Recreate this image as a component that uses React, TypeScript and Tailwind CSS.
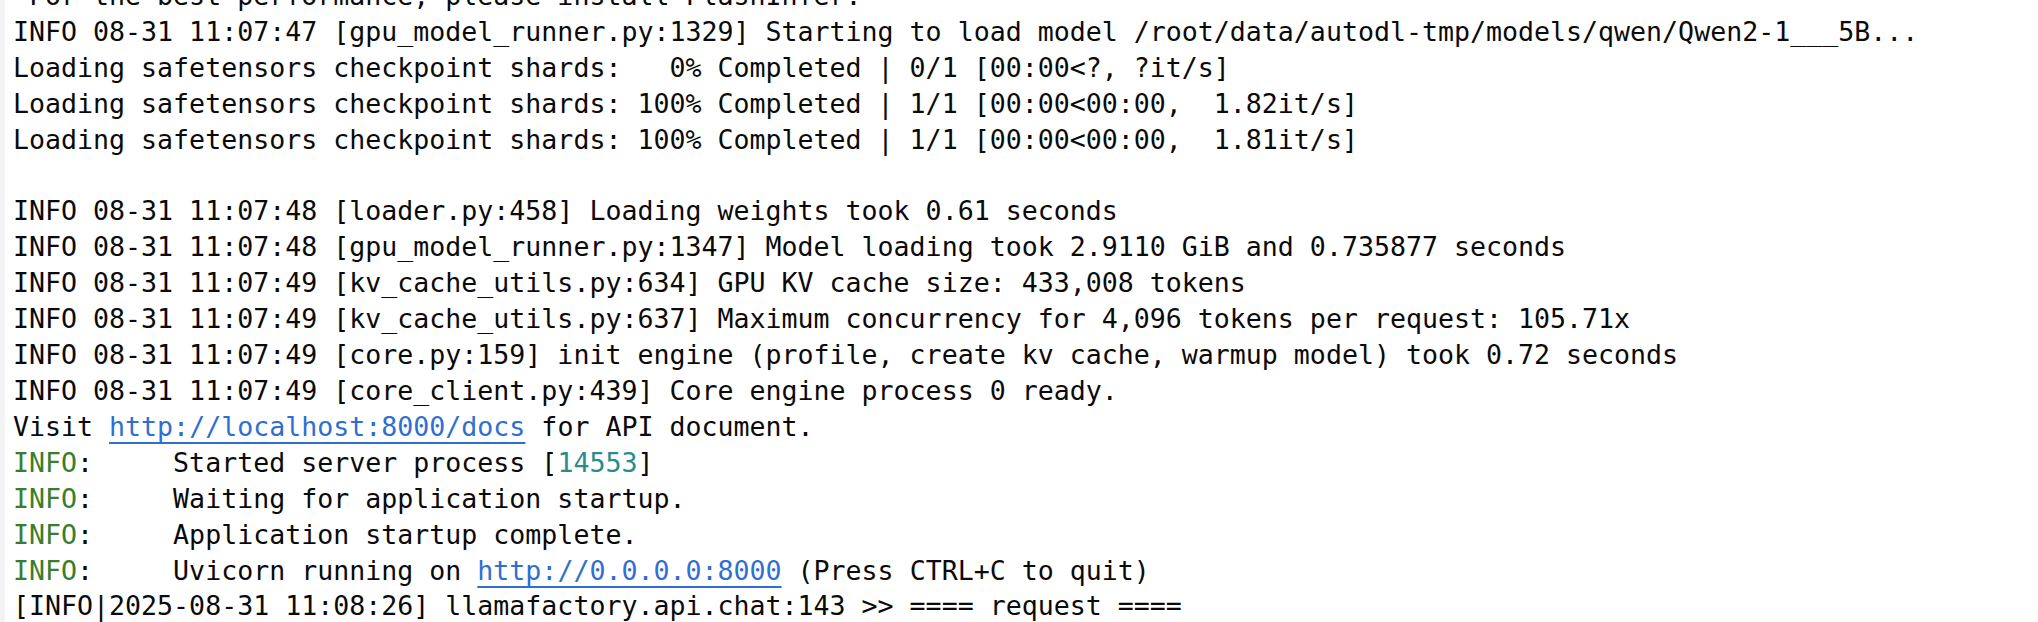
const linkCls = 'text-[#2f6fd0] underline decoration-2 underline-offset-[6px]';

function Info() {
  return <span className="text-[#3a7d2b]">INFO</span>;
}

export default function App() {
  return (
    <div className="flex h-[622px] w-[2038px] overflow-hidden bg-white">
      <div className="w-[5px] shrink-0 bg-[#f2f3f5]" />
      <div
        className="-mt-[22px] pl-[8px] whitespace-pre text-[26.6px] leading-[35.9px] text-[#0a0a0a]"
        style={{ fontFamily: '"DejaVu Sans Mono", "Liberation Mono", monospace' }}
      >
        <div> For the best performance, please install FlashInfer.</div>
        <div>INFO 08-31 11:07:47 [gpu_model_runner.py:1329] Starting to load model /root/data/autodl-tmp/models/qwen/Qwen2-1___5B...</div>
        <div>Loading safetensors checkpoint shards:   0% Completed | 0/1 [00:00&lt;?, ?it/s]</div>
        <div>Loading safetensors checkpoint shards: 100% Completed | 1/1 [00:00&lt;00:00,  1.82it/s]</div>
        <div>Loading safetensors checkpoint shards: 100% Completed | 1/1 [00:00&lt;00:00,  1.81it/s]</div>
        <div> </div>
        <div>INFO 08-31 11:07:48 [loader.py:458] Loading weights took 0.61 seconds</div>
        <div>INFO 08-31 11:07:48 [gpu_model_runner.py:1347] Model loading took 2.9110 GiB and 0.735877 seconds</div>
        <div>INFO 08-31 11:07:49 [kv_cache_utils.py:634] GPU KV cache size: 433,008 tokens</div>
        <div>INFO 08-31 11:07:49 [kv_cache_utils.py:637] Maximum concurrency for 4,096 tokens per request: 105.71x</div>
        <div>INFO 08-31 11:07:49 [core.py:159] init engine (profile, create kv cache, warmup model) took 0.72 seconds</div>
        <div>INFO 08-31 11:07:49 [core_client.py:439] Core engine process 0 ready.</div>
        <div>
          Visit <span className={linkCls}>http://localhost:8000/docs</span> for API document.
        </div>
        <div>
          <Info />:     Started server process [<span className="text-[#2a8c8c]">14553</span>]
        </div>
        <div>
          <Info />:     Waiting for application startup.
        </div>
        <div>
          <Info />:     Application startup complete.
        </div>
        <div>
          <Info />:     Uvicorn running on <span className={linkCls}>http://0.0.0.0:8000</span> (Press CTRL+C to quit)
        </div>
        <div>[INFO|2025-08-31 11:08:26] llamafactory.api.chat:143 &gt;&gt; ==== request ====</div>
      </div>
    </div>
  );
}
